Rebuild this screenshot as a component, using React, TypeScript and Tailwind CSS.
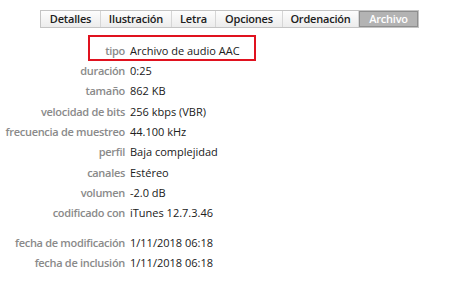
import React from "react";

const tabs: [string, string][] = [
  ["Detalles", "w-[60px]"],
  ["Ilustración", "w-[71px]"],
  ["Letra", "w-[44px]"],
  ["Opciones", "w-[67px]"],
  ["Ordenación", "w-[76px]"],
  ["Archivo", "w-[59px]"],
];

const rows: [string, string][] = [
  ["tipo", "Archivo de audio AAC"],
  ["duración", "0:25"],
  ["tamaño", "862 KB"],
  ["velocidad de bits", "256 kbps (VBR)"],
  ["frecuencia de muestreo", "44.100 kHz"],
  ["perfil", "Baja complejidad"],
  ["canales", "Estéreo"],
  ["volumen", "-2.0 dB"],
  ["codificado con", "iTunes 12.7.3.46"],
];

const dates: [string, string][] = [
  ["fecha de modificación", "1/11/2018 06:18"],
  ["fecha de inclusión", "1/11/2018 06:18"],
];

function Row({ label, value, boxed }: { label: string; value: string; boxed?: boolean }) {
  return (
    <div className="relative flex h-[20.3px] items-center whitespace-nowrap">
      <div className="w-[125px] shrink-0 text-right font-semibold tracking-[-0.3px] text-[#8a8a8a]">{label}</div>
      <div className="pl-[5px] text-[#202020]">{value}</div>
      {boxed && (
        <div className="absolute left-[88px] top-[-6px] h-[26px] w-[168px] border-[2.5px] border-[#e0121f]" />
      )}
    </div>
  );
}

export default function App() {
  return (
    <div
      className="h-[288px] w-[450px] overflow-hidden bg-white text-[11px]"
      style={{ fontFamily: "'Open Sans', 'Noto Sans', sans-serif" }}
    >
      <div className="flex pl-[40px] pt-[10px]">
        <div className="flex h-[18px] border border-[#c4c4c4] bg-gradient-to-b from-[#fdfdfd] to-[#ececec]">
          {tabs.map(([t, w]) =>
            t === "Archivo" ? (
              <div
                key={t}
                className={`${w} flex items-center justify-center border border-[#8e8e8e] bg-[#b3b3b3] font-semibold tracking-[-0.2px] text-white`}
              >
                {t}
              </div>
            ) : (
              <div
                key={t}
                className={`${w} flex items-center justify-center border-r border-[#d6d6d6] font-semibold tracking-[-0.2px] text-[#202020]`}
              >
                {t}
              </div>
            )
          )}
        </div>
      </div>
      <div className="mt-[13px]">
        {rows.map(([l, v]) => (
          <Row key={l} label={l} value={v} boxed={l === "tipo"} />
        ))}
        <div className="mt-[9px]">
          {dates.map(([l, v]) => (
            <Row key={l} label={l} value={v} />
          ))}
        </div>
      </div>
    </div>
  );
}
